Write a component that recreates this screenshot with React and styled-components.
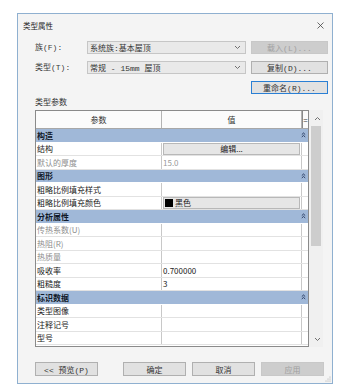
import React from "react";
import styled, { createGlobalStyle } from "styled-components";

const GlobalStyle = createGlobalStyle`
  html, body {
    margin: 0;
    padding: 0;
    background: #ffffff;
  }
  body {
    font-family: "Noto Sans CJK SC", "Noto Sans", sans-serif;
    color: #222;
  }
  * { box-sizing: border-box; }
`;

const Page = styled.div`
  padding: 13px 0 0 17px;
`;

const Dialog = styled.div`
  position: relative;
  width: 316px;
  height: 371px;
  border: 1px solid #8fb0d0;
  background: #f4f4f4;
  display: flex;
  flex-direction: column;
`;

const TitleBar = styled.div`
  height: 22px;
  display: flex;
  align-items: center;
  justify-content: space-between;
  padding: 0 8px 0 5px;
  font-size: 7.5px;
`;

const Body = styled.div`
  padding: 5px 8px 0 17px;
  display: flex;
  flex-direction: column;
`;

const TopGrid = styled.div`
  display: grid;
  grid-template-columns: 47px 159px 77px;
  grid-template-rows: 13px 13px 13px;
  column-gap: 5px;
  row-gap: 7px;
`;

const Label = styled.div`
  font-size: 8px;
  line-height: 13px;
  color: #3a3a3a;
  font-family: "Liberation Mono", "Noto Sans CJK SC", monospace;
`;

const Select = styled.div`
  display: flex;
  align-items: center;
  justify-content: space-between;
  padding: 0 4px 0 2px;
  border: 1px solid #c6c6c6;
  background: #e9e9e9;
  color: #333;
  font-size: 8px;
  font-family: "Liberation Mono", "Noto Sans CJK SC", monospace;
`;

const Button = styled.div`
  display: flex;
  align-items: center;
  justify-content: center;
  height: ${(p) => p.$h || 13}px;
  width: ${(p) => (p.$w ? p.$w + "px" : "auto")};
  border: 1px solid ${(p) => (p.$focus ? "#2a7fd4" : p.$off ? "#c8c8c8" : "#b0b0b0")};
  background: ${(p) => (p.$off ? "#cdcdcd" : "#e1e1e1")};
  color: ${(p) => (p.$off ? "#a0a0a0" : "#333")};
  font-size: 8px;
  font-family: "Liberation Mono", "Noto Sans CJK SC", monospace;
  white-space: pre;
`;

const SectionLabel = styled.div`
  margin: 2px 0;
  line-height: 12px;
  font-size: 8px;
  color: #333;
`;

const TableArea = styled.div`
  display: flex;
  height: 237px;
`;

const Table = styled.div`
  width: 274px;
  border: 1px solid #8a8a8a;
  background: #ffffff;
  display: flex;
  flex-direction: column;
`;

const HeaderRow = styled.div`
  display: grid;
  grid-template-columns: 126px 140px 1fr;
  height: 18px;
  background: #fbfbfb;
  border-bottom: 1px solid #a8a8a8;
  font-size: 8px;
  color: #333;
`;

const HeaderCell = styled.div`
  display: flex;
  align-items: center;
  justify-content: center;
  border-right: ${(p) => (p.$last ? "none" : "1px solid #b4b4b4")};
`;

const EqBox = styled.div`
  width: 100%;
  height: 100%;
  display: flex;
  align-items: center;
  justify-content: center;
  font-size: 8px;
  border-left: 1px solid #8a8a8a;
`;

const GroupRow = styled.div`
  height: 13.5px;
  display: flex;
  align-items: center;
  justify-content: space-between;
  padding: 0 2px 0 1px;
  background: #a0b8d8;
  border-bottom: 1px solid #ffffff;
  font-size: 8px;
  font-weight: 700;
  color: #101828;
`;

const Row = styled.div`
  display: grid;
  grid-template-columns: 126px 140px 1fr;
  height: 13.5px;
  border-bottom: 1px solid #e2e2e2;
  font-size: 8px;
`;

const NameCell = styled.div`
  display: flex;
  align-items: center;
  padding-left: 1px;
  border-right: 1px solid #c8c8c8;
  color: ${(p) => (p.$dim ? "#8e8e8e" : "#1a1a1a")};
  white-space: nowrap;
`;

const ValueCell = styled.div`
  display: flex;
  align-items: center;
  padding: 0 1px;
  border-right: 1px solid #c8c8c8;
  color: ${(p) => (p.$dim ? "#9a9a9a" : "#1a1a1a")};
`;

const CellButton = styled.div`
  flex: 1;
  height: 12px;
  display: flex;
  align-items: center;
  justify-content: ${(p) => (p.$left ? "flex-start" : "center")};
  gap: 2px;
  padding-left: ${(p) => (p.$left ? "1px" : "0")};
  background: #e6e6e6;
  border: 1px solid #b8b8b8;
`;

const Swatch = styled.span`
  width: 8px;
  height: 8px;
  background: #000;
`;

const Scrollbar = styled.div`
  width: 14px;
  display: flex;
  flex-direction: column;
  align-items: center;
  background: #f0f0f0;
`;

const ArrowBox = styled.div`
  height: 16px;
  width: 100%;
  display: flex;
  align-items: center;
  justify-content: center;
  padding-left: 2px;
`;

const Thumb = styled.div`
  width: 10px;
  height: 120px;
  background: #cdcdcd;
`;

const Track = styled.div`
  flex: 1;
`;

const Footer = styled.div`
  margin-top: 15px;
  display: flex;
  justify-content: space-between;
`;

const ButtonGroup = styled.div`
  display: flex;
  gap: 6px;
`;

const Grip = styled.svg`
  position: absolute;
  right: 1px;
  bottom: 1px;
`;

const Chevron = ({ up }) => (
  <svg width="7" height="5" viewBox="0 0 7 5">
    <polyline
      points={up ? "1,4 3.5,1.5 6,4" : "1,1 3.5,3.5 6,1"}
      fill="none"
      stroke="#707070"
      strokeWidth="1"
    />
  </svg>
);

const Collapse = () => (
  <svg width="5" height="6" viewBox="0 0 5 6">
    <polyline points="0.8,2.6 2.5,1 4.2,2.6" fill="none" stroke="#1d2f55" strokeWidth="0.9" />
    <polyline points="0.8,5 2.5,3.4 4.2,5" fill="none" stroke="#1d2f55" strokeWidth="0.9" />
  </svg>
);

const rows = [
  { group: "构造" },
  { name: "结构", value: "编辑...", kind: "button" },
  { name: "默认的厚度", value: "15.0", dim: true },
  { group: "图形" },
  { name: "粗略比例填充样式", value: "" },
  { name: "粗略比例填充颜色", value: "黑色", kind: "color" },
  { group: "分析属性" },
  { name: "传热系数(U)", value: "", dim: true },
  { name: "热阻(R)", value: "", dim: true },
  { name: "热质量", value: "", dim: true },
  { name: "吸收率", value: "0.700000" },
  { name: "粗糙度", value: "3" },
  { group: "标识数据" },
  { name: "类型图像", value: "" },
  { name: "注释记号", value: "" },
  { name: "型号", value: "" },
];

export default function App() {
  return (
    <Page>
      <GlobalStyle />
      <Dialog>
        <TitleBar>
          <span>类型属性</span>
          <svg width="7" height="7" viewBox="0 0 7 7">
            <path d="M0.5 0.5 L6.5 6.5 M6.5 0.5 L0.5 6.5" stroke="#444" strokeWidth="0.8" />
          </svg>
        </TitleBar>
        <Body>
          <TopGrid>
            <Label>族(F):</Label>
            <Select>
              <span>系统族:基本屋顶</span>
              <Chevron />
            </Select>
            <Button $off>载入(L)...</Button>
            <Label>类型(T):</Label>
            <Select>
              <span>常规 - 15mm 屋顶</span>
              <Chevron />
            </Select>
            <Button>复制(D)...</Button>
            <span />
            <span />
            <Button $focus>重命名(R)...</Button>
          </TopGrid>
          <SectionLabel>类型参数</SectionLabel>
          <TableArea>
            <Table>
              <HeaderRow>
                <HeaderCell>参数</HeaderCell>
                <HeaderCell>值</HeaderCell>
                <HeaderCell $last>
                  <EqBox>=</EqBox>
                </HeaderCell>
              </HeaderRow>
              {rows.map((r, i) =>
                r.group ? (
                  <GroupRow key={i}>
                    <span>{r.group}</span>
                    <Collapse />
                  </GroupRow>
                ) : (
                  <Row key={i}>
                    <NameCell $dim={r.dim}>{r.name}</NameCell>
                    <ValueCell $dim={r.dim}>
                      {r.kind === "button" ? (
                        <CellButton>{r.value}</CellButton>
                      ) : r.kind === "color" ? (
                        <CellButton $left>
                          <Swatch />
                          {r.value}
                        </CellButton>
                      ) : (
                        r.value
                      )}
                    </ValueCell>
                    <span />
                  </Row>
                )
              )}
            </Table>
            <Scrollbar>
              <ArrowBox>
                <Chevron up />
              </ArrowBox>
              <Thumb />
              <Track />
              <ArrowBox>
                <Chevron />
              </ArrowBox>
            </Scrollbar>
          </TableArea>
          <Footer>
            <Button $w={63} $h={14}>{"<< 预览(P)"}</Button>
            <ButtonGroup>
              <Button $w={63} $h={14}>确定</Button>
              <Button $w={63} $h={14}>取消</Button>
              <Button $w={63} $h={14} $off>应用</Button>
            </ButtonGroup>
          </Footer>
        </Body>
        <Grip width="6" height="6" viewBox="0 0 6 6">
          <circle cx="5" cy="1" r="0.5" fill="#999" />
          <circle cx="3" cy="3" r="0.5" fill="#999" />
          <circle cx="5" cy="3" r="0.5" fill="#999" />
          <circle cx="1" cy="5" r="0.5" fill="#999" />
          <circle cx="3" cy="5" r="0.5" fill="#999" />
          <circle cx="5" cy="5" r="0.5" fill="#999" />
        </Grip>
      </Dialog>
    </Page>
  );
}
